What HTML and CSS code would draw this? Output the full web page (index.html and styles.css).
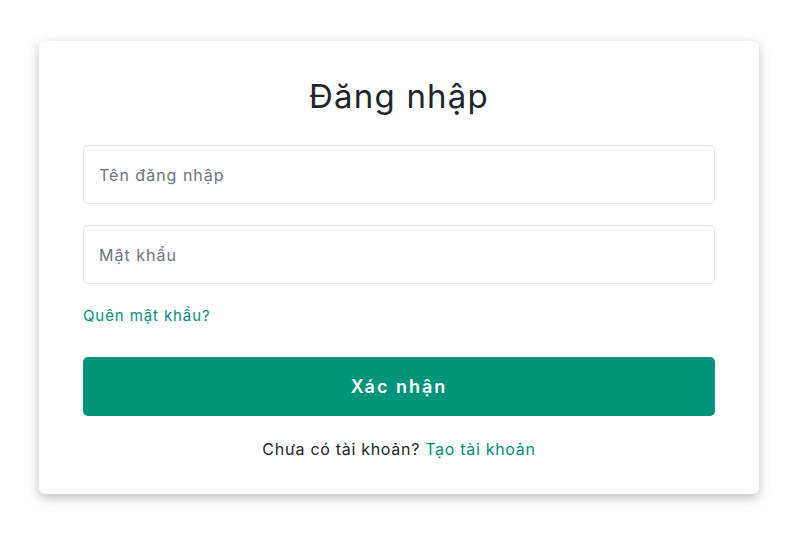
FILE: index.html
```html
<!DOCTYPE html>
<html lang="vi">
<head>
<meta charset="utf-8">
<title>Đăng nhập</title>
<link rel="stylesheet" href="styles.css">
</head>
<body>
<main class="page">
  <form class="card">
    <h1 class="title">Đăng nhập</h1>
    <div class="field"><input class="input" type="text" placeholder="Tên đăng nhập"></div>
    <div class="field"><input class="input" type="password" placeholder="Mật khẩu"></div>
    <a class="forgot" href="#">Quên mật khẩu?</a>
    <button class="submit" type="button">Xác nhận</button>
    <p class="signup">Chưa có tài khoản? <a class="link" href="#">Tạo tài khoản</a></p>
  </form>
</main>
</body>
</html>
```
FILE: styles.css
```css
* { box-sizing: border-box; }
html, body { margin: 0; padding: 0; background: #fff; }
body { font-family: "Inter", "Noto Sans", sans-serif; color: #212529; }
.page { padding: 41px 47px 40px 39px; min-height: 534px; }
.card {
  width: 720px;
  height: 453px;
  background: #fff;
  border-radius: 6px;
  box-shadow: 0 4px 12px rgba(0,0,0,0.25);
  padding: 0 44px;
  display: flex;
  flex-direction: column;
}
.title {
  margin: 34px 0 0;
  height: 42px;
  line-height: 42px;
  font-size: 33px;
  font-weight: 400;
  letter-spacing: 1.2px;
  text-align: center;
  color: #212529;
}
.field { margin-top: 28px; }
.field + .field { margin-top: 21px; }
.input {
  display: block;
  width: 100%;
  height: 59px;
  border: 1px solid #dee2e6;
  border-radius: 5px;
  padding: 0 15px;
  font-family: inherit;
  font-size: 16px;
  letter-spacing: 1px;
  color: #212529;
  outline: none;
}
.input::placeholder { color: #6c757d; opacity: 1; }
.forgot {
  margin-top: 22px;
  font-size: 15px;
  line-height: 20px;
  letter-spacing: 0.9px;
  color: #00907a;
  text-decoration: none;
  align-self: flex-start;
}
.submit {
  margin-top: 31px;
  height: 59px;
  border: none;
  border-radius: 5px;
  background: #009478;
  color: #fff;
  font-family: inherit;
  font-size: 18px;
  font-weight: 600;
  letter-spacing: 2px;
}
.signup {
  margin: 23px 0 0;
  text-align: center;
  font-size: 16px;
  line-height: 20px;
  letter-spacing: 0.7px;
  color: #212529;
}
.link { color: #00907a; text-decoration: none; }
```
